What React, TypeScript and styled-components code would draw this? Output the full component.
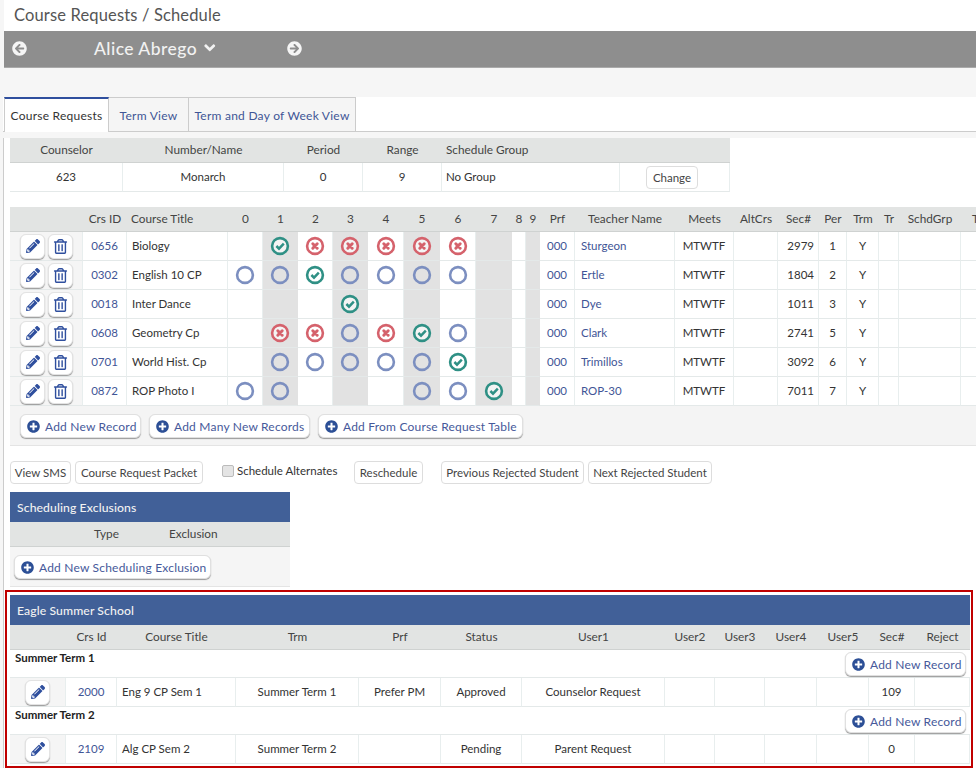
import React from 'react';
import styled, { createGlobalStyle } from 'styled-components';
import { FaArrowCircleLeft, FaArrowCircleRight, FaAngleDown, FaPencilAlt, FaRegTrashAlt, FaPlusCircle } from 'react-icons/fa';

const Global = createGlobalStyle`
  html, body { margin: 0; padding: 0; height: 768px; overflow: hidden; background: #f6f6f6; }
  body { font-family: Lato, "Noto Sans", sans-serif; font-size: 12px; color: #333; }
  * { box-sizing: border-box; }
`;

const Page = styled.div`width: 976px; height: 768px; overflow: hidden;`;
const TitleBar = styled.div`height: 31px; margin-left: 4px; background: #fff; padding: 5px 0 0 10px; font-size: 16.5px; color: #555; letter-spacing: .15px;`;
const Band = styled.div`height: 37px; margin-left: 4px; background: #8e8e8e; border-bottom: 1px solid #aaa; display: flex; align-items: center; color: #f2f2f2; padding: 0 0 2px 8px; font-size: 17.5px; letter-spacing: .45px;`;
const NavIcon = styled.span`display: flex; font-size: 15px; color: #f5f5f5; padding-top: 1px;`;
const StudentName = styled.div`display: flex; align-items: center; gap: 4px; width: 193px; margin-left: 67px; font-weight: 500;`;
const Spacer = styled.div`height: 29px;`;
const Tabs = styled.div`display: flex; height: 35px; margin-left: 3px; padding-left: 1px; background: #fff; border-bottom: 1px solid #ccc;`;
const Tab = styled.div<{ $active?: boolean }>`
  height: ${p => (p.$active ? 35 : 34)}px;
  padding-top: 10px; text-align: center; letter-spacing: .25px;
  width: ${p => (p.$active ? 105 : 80)}px;
  background: ${p => (p.$active ? '#fff' : '#f5f5f5')};
  color: ${p => (p.$active ? '#333' : '#3f5596')};
  border-top: ${p => (p.$active ? '2px solid #2f4f9e' : '1px solid #ccc')};
  border-right: 1px solid #ccc;
  ${p => p.$active && 'border-left: 1px solid #ccc; padding-top: 9px;'}
`;
const WideTab = styled(Tab)`width: 167px;`;
const Content = styled.div`margin-left: 3px; border-left: 1px solid #ccc; padding-left: 6px; background: #fff; height: 640px;`;
const Table = styled.table<{ $w: number; $mt: number }>`
  table-layout: fixed; border-collapse: separate; border-spacing: 0;
  width: ${p => p.$w}px; margin-top: ${p => p.$mt}px;
`;
const Th = styled.th<{ $align?: string; $h?: number }>`
  height: ${p => p.$h ?? 25}px; padding: 0 ${p => (p.$align === 'left' ? '4px' : '0')} 2px;
  background: #e2e4e3; border-bottom: 1px solid #cfd2d1;
  font-weight: 400; font-size: 11.8px; color: #444; text-align: ${p => p.$align ?? 'center'}; white-space: nowrap; overflow: visible;
`;
const LastTh = styled(Th)`padding-left: 11px; text-align: left;`;
const Td = styled.td<{ $align?: string; $gray?: boolean; $side?: boolean; $flush?: boolean; $pad?: number; $link?: boolean }>`
  height: 29px; padding: 0 ${p => p.$pad ?? 0}px ${p => (p.$flush ? 0 : 2)}px;
  background: ${p => (p.$gray ? '#e2e2e2' : p.$side ? '#f5f5f5' : '#fff')};
  border-bottom: 1px solid #e4e9e9; border-right: 1px solid ${p => (p.$gray ? '#e2e2e2' : '#e8eeee')};
  text-align: ${p => p.$align ?? 'center'}; white-space: nowrap; font-size: 11.5px;
  color: ${p => (p.$link ? '#3f5596' : '#333')};
`;
const Actions = styled.div`display: flex; gap: 3px; justify-content: flex-end; padding-right: 9px;`;
const IconButton = styled.button`
  width: 25px; height: 25px; padding: 0; display: flex; align-items: center; justify-content: center;
  background: #fff; border: 1px solid #e3e3e3; border-radius: 6px; box-shadow: 0 1px 1px #999; color: #2f4f9e; font-size: 14px;
`;
const TrashButton = styled(IconButton)`font-size: 15px;`;
const CenterButton = styled(IconButton)`margin: 0 auto;`;
const Dot = styled.svg`display: block; margin: 0 auto;`;
const ButtonRow = styled.div`height: 40px; background: #f4f4f4; border-bottom: 1px solid #e4e4e4; display: flex; gap: 8px; padding: 8px 0 0 10px;`;
const AddButton = styled.button<{ $w: number }>`
  width: ${p => p.$w}px; height: 24px; padding: 0 0 0 6px; display: flex; align-items: center; gap: 5px; flex: none;
  background: #fff; border: 1px solid #e0e0e0; border-radius: 6px; box-shadow: 0 1px 1px #999;
  font: 12px Lato, sans-serif; color: #46599a; letter-spacing: .2px; white-space: nowrap;
  svg { color: #2c4f96; font-size: 13px; flex: none; }
`;
const ToolRow = styled.div`display: flex; align-items: flex-start; margin-top: 15px; height: 23px;`;
const PlainButton = styled.button<{ $w: number; $ml: number }>`
  width: ${p => p.$w}px; margin-left: ${p => p.$ml}px; height: 23px; padding: 0; flex: none;
  background: #fff; border: 1px solid #ddd; border-radius: 4px; font: 11.5px Lato, sans-serif; color: #444; white-space: nowrap;
`;
const CheckLabel = styled.label`display: flex; align-items: center; gap: 3px; margin: 3px 0 0 19px; width: 115px; white-space: nowrap; font-size: 11.5px; height: 13px;`;
const Box = styled.span`width: 12px; height: 12px; background: #e4e4e4; border: 1px solid #bbb; border-radius: 2px; flex: none;`;
const ChangeButton = styled(PlainButton)`display: block;`;
const Panel = styled.div`width: 280px; margin-top: 8px;`;
const PanelHead = styled.div`height: 30px; background: #416098; color: #f2f2f2; padding: 8px 0 0 7px; font-size: 12.2px; font-weight: 500; letter-spacing: .1px;`;
const PanelBody = styled.div`height: 40px; background: #f5f5f5; border-bottom: 1px solid #e4e4e4; padding: 8px 0 0 4px;`;
const SubHead = styled.div`height: 25px; background: #e2e4e3; border-bottom: 1px solid #cfd2d1; display: flex; padding-top: 4px; font-size: 11.8px; color: #444;`;
const SubType = styled.span`margin-left: 84px; width: 75px;`;
const RedBox = styled.div`width: 968px; height: 178px; margin: 3px 0 0 -5px; border: 2px solid #c00000; padding: 3px 1px 0 3px; background: #fff;`;
const TermCell = styled.td`height: 28px; padding: 0; background: #fff; border-bottom: 1px solid #e4e9e9;`;
const TermRow = styled.div`display: flex; justify-content: space-between; align-items: flex-start; height: 27px; padding: 2px 4px 0 5px;`;
const TermName = styled.b`display: block; margin-top: -1px; line-height: 14px; font-size: 11.5px; font-weight: 700; color: #222;`;
const Col = styled.col<{ $w: number }>`width: ${p => p.$w}px;`;

type Mark = '' | 'c' | 'x' | 'o';

function StatusIcon({ m, gray }: { m: Mark; gray?: boolean }) {
  if (!m) return null;
  const stroke = m === 'c' ? '#2f9085' : m === 'x' ? '#d5626c' : '#7c8fc0';
  const fill = gray && m === 'o' ? 'none' : gray ? '#f4f4f4' : '#fff';
  return (
    <Dot width="20" height="20" viewBox="0 0 20 20">
      <circle cx="10" cy="10" r="7.9" fill={fill} stroke={stroke} strokeWidth="2.6" />
      {m === 'c' && <path d="M6.4 10l2.6 2.6 4.8-4.9" fill="none" stroke={stroke} strokeWidth="2.5" />}
      {m === 'x' && <path d="M7.8 7.8l4.4 4.4M12.2 7.8l-4.4 4.4" fill="none" stroke={stroke} strokeWidth="3" strokeLinecap="round" />}
    </Dot>
  );
}

const mainCols = [73, 44, 101, 35, 35, 35, 35, 36, 36, 36, 36, 14, 14, 35, 100, 59, 44, 41, 28, 32, 20, 62, 39];
const topCols = [113, 161, 79, 79, 178, 110];
const sumCols = [56, 51, 119, 123, 82, 81, 143, 50, 50, 52, 52, 46, 55];

const rows: { id: string; title: string; marks: Mark[]; teacher: string; sec: string; per: string }[] = [
  { id: '0656', title: 'Biology', marks: ['', 'c', 'x', 'x', 'x', 'x', 'x', ''], teacher: 'Sturgeon', sec: '2979', per: '1' },
  { id: '0302', title: 'English 10 CP', marks: ['o', 'o', 'c', 'o', 'o', 'o', 'o', ''], teacher: 'Ertle', sec: '1804', per: '2' },
  { id: '0018', title: 'Inter Dance', marks: ['', '', '', 'c', '', '', '', ''], teacher: 'Dye', sec: '1011', per: '3' },
  { id: '0608', title: 'Geometry Cp', marks: ['', 'x', 'x', 'o', 'x', 'c', 'o', ''], teacher: 'Clark', sec: '2741', per: '5' },
  { id: '0701', title: 'World Hist. Cp', marks: ['', 'o', 'o', 'o', 'o', 'o', 'c', ''], teacher: 'Trimillos', sec: '3092', per: '6' },
  { id: '0872', title: 'ROP Photo I', marks: ['o', 'o', '', '', '', 'o', 'o', 'c'], teacher: 'ROP-30', sec: '7011', per: '7' },
];

function Add({ w, children }: { w: number; children: React.ReactNode }) {
  return <AddButton $w={w}><FaPlusCircle />{children}</AddButton>;
}

function SummerRow({ id, title, trm, prf, status, user, sec }: Record<string, string>) {
  return (
    <tr>
      <Td $side $flush><CenterButton><FaPencilAlt /></CenterButton></Td>
      <Td $link>{id}</Td>
      <Td $align="left" $pad={5}>{title}</Td>
      <Td>{trm}</Td>
      <Td>{prf}</Td>
      <Td>{status}</Td>
      <Td>{user}</Td>
      <Td /><Td /><Td /><Td />
      <Td>{sec}</Td>
      <Td />
    </tr>
  );
}

export default function App() {
  return (
    <Page>
      <Global />
      <TitleBar>Course Requests / Schedule</TitleBar>
      <Band>
        <NavIcon><FaArrowCircleLeft /></NavIcon>
        <StudentName>Alice Abrego <FaAngleDown /></StudentName>
        <NavIcon><FaArrowCircleRight /></NavIcon>
      </Band>
      <Spacer />
      <Tabs>
        <Tab $active>Course Requests</Tab>
        <Tab>Term View</Tab>
        <WideTab>Term and Day of Week View</WideTab>
      </Tabs>
      <Content>
        <Table $w={720} $mt={6}>
          <colgroup>{topCols.map((w, i) => <Col key={i} $w={w} />)}</colgroup>
          <thead>
            <tr>
              <Th>Counselor</Th><Th>Number/Name</Th><Th>Period</Th><Th>Range</Th>
              <Th $align="left">Schedule Group</Th><Th />
            </tr>
          </thead>
          <tbody>
            <tr>
              <Td>623</Td><Td>Monarch</Td><Td>0</Td><Td>9</Td>
              <Td $align="left" $pad={4}>No Group</Td>
              <Td $flush><ChangeButton $w={52} $ml={26}>Change</ChangeButton></Td>
            </tr>
          </tbody>
        </Table>
        <Table $w={990} $mt={15}>
          <colgroup>{mainCols.map((w, i) => <Col key={i} $w={w} />)}</colgroup>
          <thead>
            <tr>
              <Th /><Th>Crs ID</Th><Th $align="left">Course Title</Th>
              {['0', '1', '2', '3', '4', '5', '6', '7', '8', '9'].map(h => <Th key={h}>{h}</Th>)}
              <Th>Prf</Th><Th>Teacher Name</Th><Th>Meets</Th><Th>AltCrs</Th><Th>Sec#</Th><Th>Per</Th><Th>Trm</Th><Th>Tr</Th><Th>SchdGrp</Th><LastTh>T</LastTh>
            </tr>
          </thead>
          <tbody>
            {rows.map(r => (
              <tr key={r.id}>
                <Td $side $flush><Actions><IconButton><FaPencilAlt /></IconButton><TrashButton><FaRegTrashAlt /></TrashButton></Actions></Td>
                <Td $link>{r.id}</Td>
                <Td $align="left" $pad={5}>{r.title}</Td>
                {r.marks.map((m, i) => (
                  <Td key={i} $flush $gray={i % 2 === 1}><StatusIcon m={m} gray={i % 2 === 1} /></Td>
                ))}
                <Td />
                <Td $gray />
                <Td $link>000</Td>
                <Td $align="left" $pad={6} $link>{r.teacher}</Td>
                <Td>MTWTF</Td>
                <Td />
                <Td $align="right" $pad={4}>{r.sec}</Td>
                <Td>{r.per}</Td>
                <Td>Y</Td>
                <Td /><Td /><Td />
              </tr>
            ))}
          </tbody>
        </Table>
        <ButtonRow>
          <Add w={121}>Add New Record</Add>
          <Add w={161}>Add Many New Records</Add>
          <Add w={205}>Add From Course Request Table</Add>
        </ButtonRow>
        <ToolRow>
          <PlainButton $w={61} $ml={0}>View SMS</PlainButton>
          <PlainButton $w={128} $ml={4}>Course Request Packet</PlainButton>
          <CheckLabel><Box />Schedule Alternates</CheckLabel>
          <PlainButton $w={69} $ml={17}>Reschedule</PlainButton>
          <PlainButton $w={143} $ml={18}>Previous Rejected Student</PlainButton>
          <PlainButton $w={124} $ml={4}>Next Rejected Student</PlainButton>
        </ToolRow>
        <Panel>
          <PanelHead>Scheduling Exclusions</PanelHead>
          <SubHead><SubType>Type</SubType><span>Exclusion</span></SubHead>
          <PanelBody><Add w={197}>Add New Scheduling Exclusion</Add></PanelBody>
        </Panel>
        <RedBox>
          <PanelHead>Eagle Summer School</PanelHead>
          <Table $w={960} $mt={0}>
            <colgroup>{sumCols.map((w, i) => <Col key={i} $w={w} />)}</colgroup>
            <thead>
              <tr>
                <Th /><Th>Crs Id</Th><Th>Course Title</Th><Th>Trm</Th><Th>Prf</Th><Th>Status</Th><Th>User1</Th>
                <Th>User2</Th><Th>User3</Th><Th>User4</Th><Th>User5</Th><Th>Sec#</Th><Th>Reject</Th>
              </tr>
            </thead>
            <tbody>
              <tr><TermCell colSpan={13}><TermRow><TermName>Summer Term 1</TermName><Add w={121}>Add New Record</Add></TermRow></TermCell></tr>
              <SummerRow id="2000" title="Eng 9 CP Sem 1" trm="Summer Term 1" prf="Prefer PM" status="Approved" user="Counselor Request" sec="109" />
              <tr><TermCell colSpan={13}><TermRow><TermName>Summer Term 2</TermName><Add w={121}>Add New Record</Add></TermRow></TermCell></tr>
              <SummerRow id="2109" title="Alg CP Sem 2" trm="Summer Term 2" prf="" status="Pending" user="Parent Request" sec="0" />
            </tbody>
          </Table>
        </RedBox>
      </Content>
    </Page>
  );
}
